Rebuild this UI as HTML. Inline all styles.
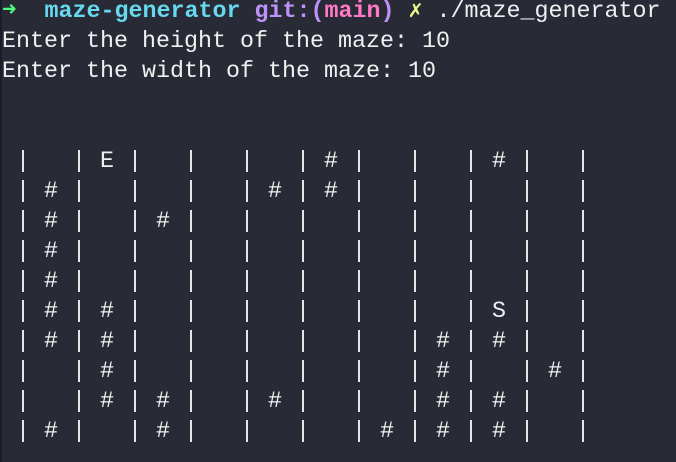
<!DOCTYPE html>
<html><head><meta charset="utf-8"><style>
html,body{margin:0;padding:0;background:#282a36;width:676px;height:462px;overflow:hidden}
body{border-left:2px solid #1c1d2c;box-sizing:border-box}
pre{margin:0;position:absolute;left:2px;top:-3px;font-family:"Liberation Mono","DejaVu Sans Mono",monospace;font-size:23.33px;line-height:30px;color:#f0f0f0;white-space:pre}
.g{color:#50fa7b;font-weight:bold;font-family:"DejaVu Sans Mono",monospace;font-size:24px;line-height:0}.c{color:#66d9ef;font-weight:bold}.p{color:#bd93f9;font-weight:bold}.r{color:#ff79c6;font-weight:bold}.y{color:#f1fa8c}
</style></head><body><pre><span class="g">➜</span>  <span class="c">maze-generator</span> <span class="p">git:(</span><span class="r">main</span><span class="p">)</span> <span class="y">✗</span> ./maze_generator
Enter the height of the maze: 10
Enter the width of the maze: 10


 |   | E |   |   |   | # |   |   | # |   |
 | # |   |   |   | # | # |   |   |   |   |
 | # |   | # |   |   |   |   |   |   |   |
 | # |   |   |   |   |   |   |   |   |   |
 | # |   |   |   |   |   |   |   |   |   |
 | # | # |   |   |   |   |   |   | S |   |
 | # | # |   |   |   |   |   | # | # |   |
 |   | # |   |   |   |   |   | # |   | # |
 |   | # | # |   | # |   |   | # | # |   |
 | # |   | # |   |   |   | # | # | # |   |</pre></body></html>
